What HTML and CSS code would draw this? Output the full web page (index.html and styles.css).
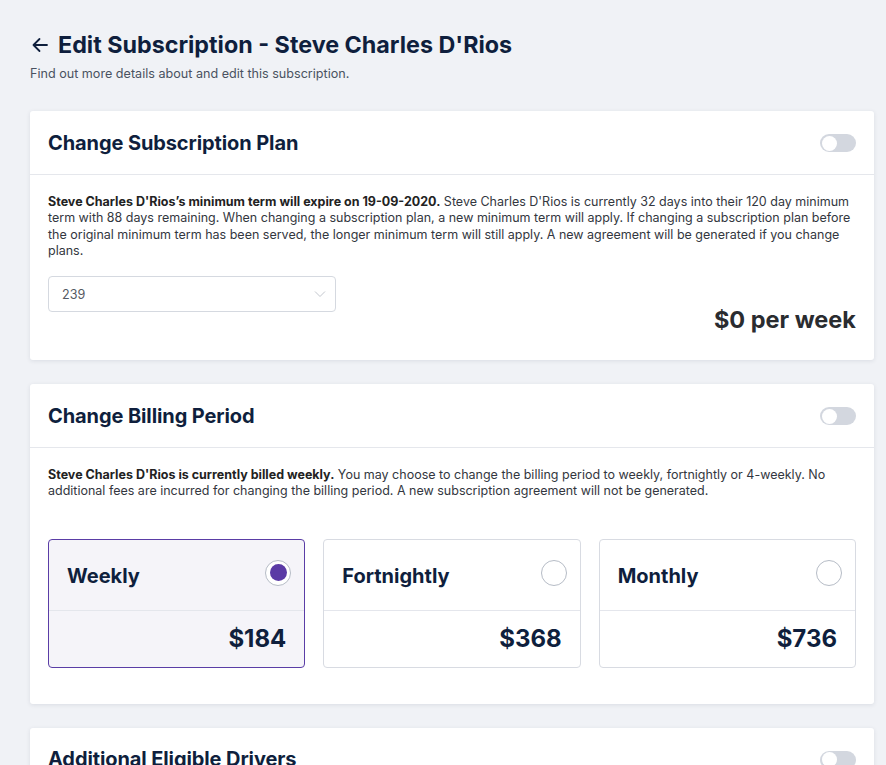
FILE: index.html
```html
<!DOCTYPE html>
<html lang="en">
<head>
<meta charset="utf-8">
<title>Edit Subscription</title>
<link rel="stylesheet" href="styles.css">
</head>
<body>
<div class="page">
  <header class="page-head">
    <h1 class="page-title">
      <svg class="back" width="18" height="18" viewBox="0 0 18 18" fill="none" stroke="#0f1f3d" stroke-width="1.8" stroke-linecap="round" stroke-linejoin="round"><path d="M16 9H2.5M8.5 3L2.5 9l6 6"/></svg>
      <span>Edit Subscription - Steve Charles D'Rios</span>
    </h1>
    <p class="page-sub">Find out more details about and edit this subscription.</p>
  </header>

  <section class="card">
    <div class="card-head">
      <h2 class="card-title">Change Subscription Plan</h2>
      <span class="toggle"><span class="knob"></span></span>
    </div>
    <div class="card-body plan-body">
      <p class="desc"><strong>Steve Charles D'Rios’s minimum term will expire on 19-09-2020.</strong> Steve Charles D'Rios is currently 32 days into their 120 day minimum term with 88 days remaining. When changing a subscription plan, a new minimum term will apply. If changing a subscription plan before the original minimum term has been served, the longer minimum term will still apply. A new agreement will be generated if you change plans.</p>
      <div class="plan-row">
        <div class="select">
          <span>239</span>
          <svg width="12" height="8" viewBox="0 0 12 8" fill="none" stroke="#c3c7ce" stroke-width="1"><path d="M1 1.5l5 5 5-5"/></svg>
        </div>
        <div class="plan-price">$0 per week</div>
      </div>
    </div>
  </section>

  <section class="card">
    <div class="card-head">
      <h2 class="card-title">Change Billing Period</h2>
      <span class="toggle"><span class="knob"></span></span>
    </div>
    <div class="card-body billing-body">
      <p class="desc"><strong>Steve Charles D'Rios is currently billed weekly.</strong> You may choose to change the billing period to weekly, fortnightly or 4-weekly. No additional fees are incurred for changing the billing period. A new subscription agreement will not be generated.</p>
      <div class="options">
        <div class="option selected">
          <div class="option-top"><span class="option-name">Weekly</span><span class="radio"><span class="dot"></span></span></div>
          <div class="option-price">$184</div>
        </div>
        <div class="option">
          <div class="option-top"><span class="option-name">Fortnightly</span><span class="radio"></span></div>
          <div class="option-price">$368</div>
        </div>
        <div class="option">
          <div class="option-top"><span class="option-name">Monthly</span><span class="radio"></span></div>
          <div class="option-price">$736</div>
        </div>
      </div>
    </div>
  </section>

  <section class="card">
    <div class="card-head">
      <h2 class="card-title">Additional Eligible Drivers</h2>
      <span class="toggle"><span class="knob"></span></span>
    </div>
    <div class="card-body">
      <p class="desc">&nbsp;</p>
    </div>
  </section>
</div>
</body>
</html>
```

FILE: styles.css
```css
* { box-sizing: border-box; }
html, body { margin: 0; padding: 0; }
body {
  background: #f0f2f6;
  font-family: Inter, "Noto Sans", Arial, sans-serif;
  color: #0f1f3d;
  overflow: hidden;
}
.page {
  padding: 30px 12px 0 30px;
}
.page-head { margin-bottom: 29px; }
.page-title {
  margin: 0;
  display: flex;
  align-items: center;
  gap: 9px;
  font-size: 23.3px;
  line-height: 30px;
  font-weight: 700;
  color: #0f1f3d;
}
.back { margin-left: 1px; flex: none; }
.page-sub {
  margin: 6px 0 0;
  font-size: 12.6px;
  line-height: 16px;
  color: #4a5261;
}
.card {
  background: #fff;
  border-radius: 3px;
  box-shadow: 0 1px 4px rgba(30, 40, 70, 0.10);
  margin-bottom: 24px;
}
.card-head {
  height: 64px;
  display: flex;
  align-items: center;
  justify-content: space-between;
  padding: 0 18px;
  border-bottom: 1px solid #e5e7ec;
}
.card-title {
  margin: 0;
  font-size: 20px;
  font-weight: 700;
  color: #0f1f3d;
  letter-spacing: -0.1px;
}
.toggle {
  width: 36px;
  height: 18px;
  border-radius: 9px;
  background: #d3d7df;
  display: flex;
  align-items: center;
  padding: 0 2px;
  margin-top: 1px;
}
.knob {
  width: 15px;
  height: 15px;
  border-radius: 50%;
  background: #fff;
}
.card-body { padding: 19px 18px 26px; }
.desc {
  margin: 0;
  font-size: 12.5px;
  line-height: 16.3px;
  color: #333740;
}
.desc strong { color: #222; font-weight: 700; }
.plan-row {
  display: flex;
  justify-content: space-between;
  align-items: flex-end;
  margin-top: 17px;
}
.select {
  width: 288px;
  height: 36px;
  border: 1px solid #d5d9e0;
  border-radius: 4px;
  display: flex;
  align-items: center;
  justify-content: space-between;
  padding: 0 9px 0 13px;
  font-size: 12.6px;
  color: #555a63;
  margin-bottom: 22px;
}
.plan-price {
  font-size: 23.5px;
  line-height: 28px;
  font-weight: 700;
  color: #2a2c30;
}
.billing-body { padding-bottom: 36px; }
.options {
  margin-top: 39px;
  display: grid;
  grid-template-columns: repeat(3, 1fr);
  gap: 18px;
}
.option {
  border: 1px solid #d8dbe2;
  border-radius: 4px;
  background: #fff;
}
.option.selected {
  border-color: #5a3da6;
  background: #f5f4f9;
}
.option-top {
  height: 71px;
  display: flex;
  align-items: center;
  justify-content: space-between;
  padding: 0 13px 0 18px;
  border-bottom: 1px solid #e4e6ec;
}
.option-name {
  font-size: 20px;
  font-weight: 700;
  color: #0f1f3d;
  margin-top: 2px;
}
.radio {
  width: 26px;
  height: 26px;
  border-radius: 50%;
  border: 1px solid #b6bcc6;
  background: #fff;
  display: flex;
  align-items: center;
  justify-content: center;
  margin-bottom: 4px;
}
.dot {
  width: 17px;
  height: 17px;
  border-radius: 50%;
  background: #5a3aa5;
}
.option-price {
  height: 56px;
  display: flex;
  align-items: center;
  justify-content: flex-end;
  padding: 0 18px;
  font-size: 24px;
  font-weight: 700;
  color: #0f1f3d;
}
```
